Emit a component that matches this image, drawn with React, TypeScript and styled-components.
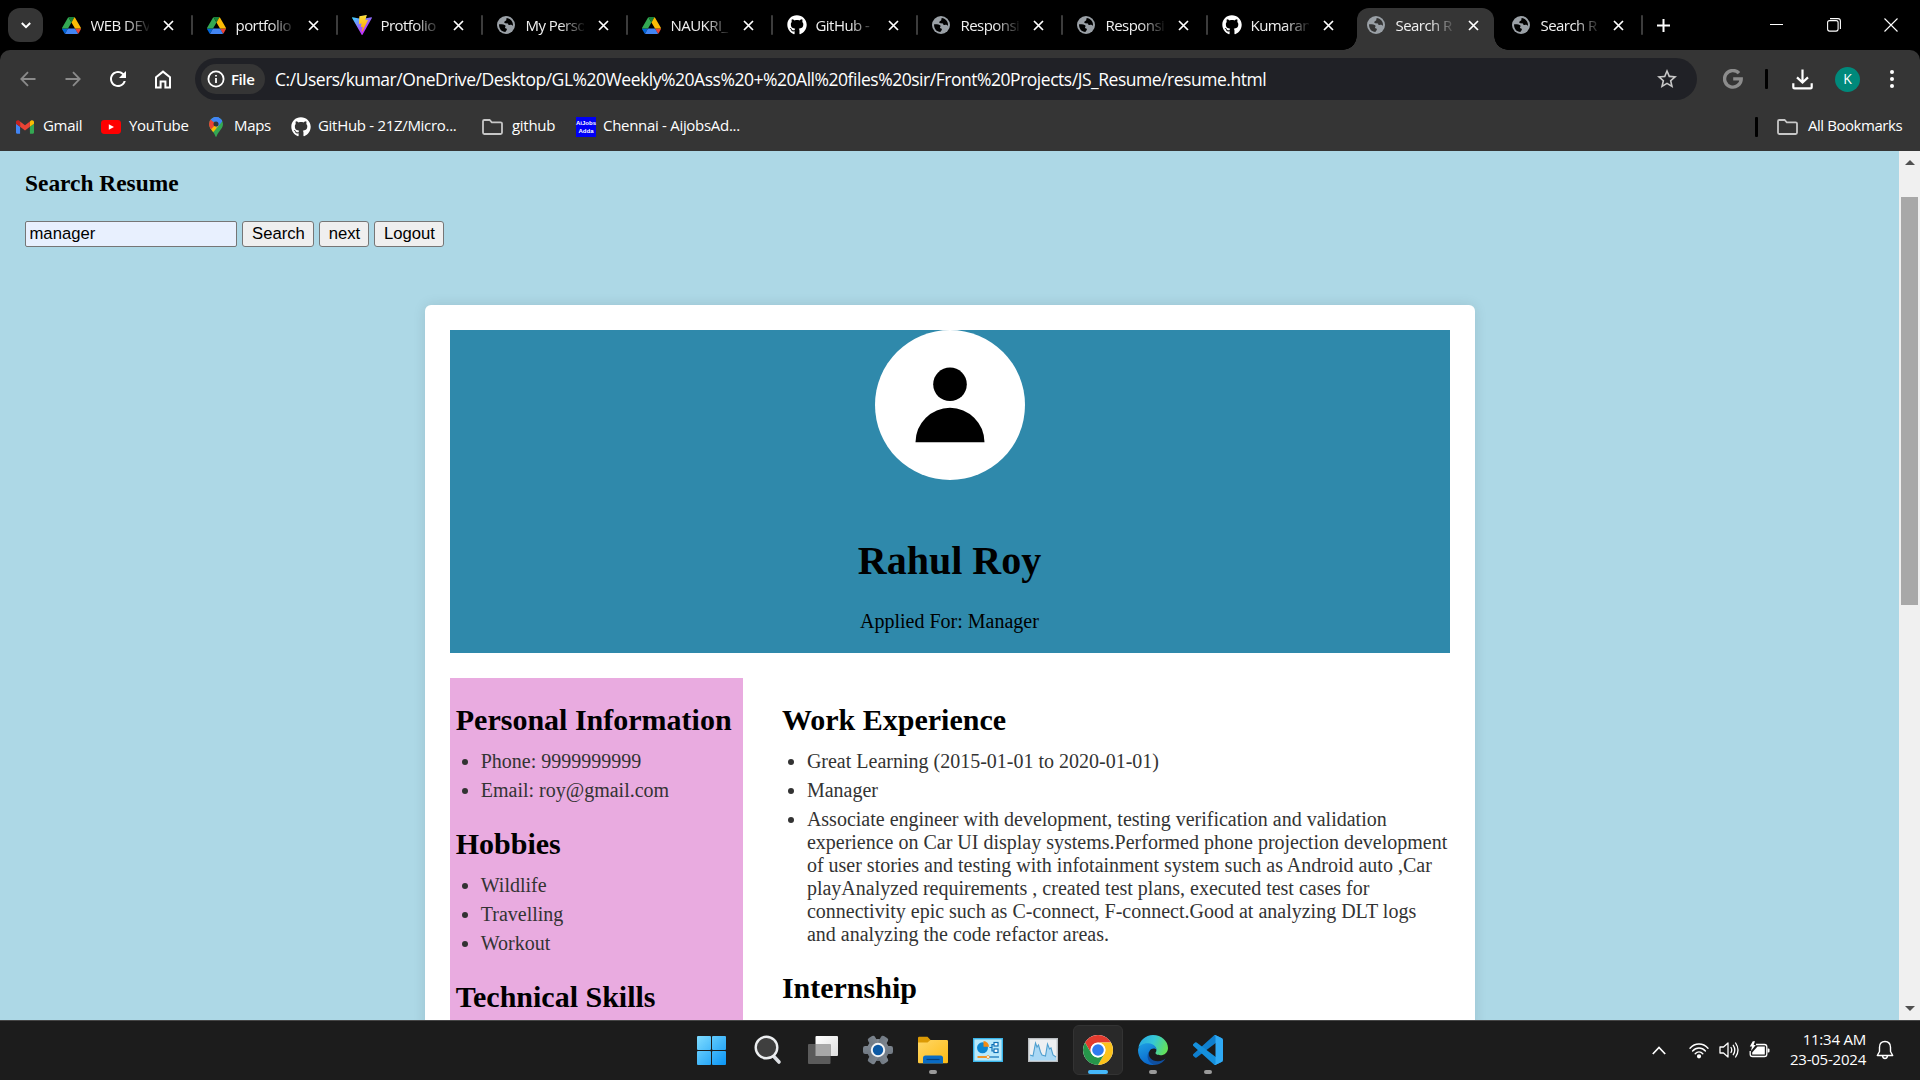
import React from "react";
import styled, { createGlobalStyle, css } from "styled-components";
import { FaGithub } from "react-icons/fa";
import { MdStarBorder, MdRefresh } from "react-icons/md";

const ui = `"Segoe UI", "Open Sans", "Noto Sans", sans-serif`;
const serif = `"Liberation Serif", "Times New Roman", serif`;
const sans = `"Liberation Sans", Arial, sans-serif`;

const GlobalStyle = createGlobalStyle`
  * { box-sizing: border-box; }
  body { margin: 0; background: #000; overflow: hidden; }
  svg { display: block; flex: none; }
`;

const Screen = styled.div`
  width: 1920px;
  height: 1080px;
  display: flex;
  flex-direction: column;
  overflow: hidden;
  background: #000;
`;

/* ---------- tab strip ---------- */

const TabStrip = styled.div`
  height: 50px;
  flex: none;
  display: flex;
  align-items: stretch;
  padding-left: 8px;
  background: #000;
  color: #f0f0f0;
  font: 15px ${ui};
`;

const TabSearch = styled.div`
  width: 35px;
  height: 34px;
  margin: 8px 8.5px 0 0;
  border-radius: 12px;
  background: #353535;
  display: grid;
  place-items: center;
`;

const TabBox = styled.div<{ $active?: boolean }>`
  position: relative;
  width: 137px;
  flex: none;
  margin: 8px 8px 0 0;
  padding: 0 0 8px 10px;
  display: flex;
  align-items: center;
  border-radius: 12px 12px 0 0;
  ${(p) =>
    p.$active &&
    css`
      background: #353535;
      &::before,
      &::after {
        content: "";
        position: absolute;
        bottom: 0;
        width: 14px;
        height: 14px;
      }
      &::before {
        left: -14px;
        background: radial-gradient(circle at 0 0, transparent 13.5px, #353535 14px);
      }
      &::after {
        right: -14px;
        background: radial-gradient(circle at 100% 0, transparent 13.5px, #353535 14px);
      }
    `}
`;

const TabIcon = styled.span`
  width: 20px;
  height: 20px;
  display: grid;
  place-items: center;
  justify-items: start;
`;

const TabTitle = styled.span`
  width: 58px;
  margin-left: 9px;
  overflow: hidden;
  white-space: nowrap;
  letter-spacing: -0.55px;
  line-height: 22px;
  mask-image: linear-gradient(90deg, #000 58%, transparent 104%);
`;

const TabClose = styled.span`
  margin-left: 14.5px;
`;

const TabDivider = styled.span`
  position: absolute;
  left: 139.5px;
  top: 7px;
  width: 2px;
  height: 20px;
  border-radius: 1px;
  background: #3c3c3c;
`;

const NewTab = styled.div`
  display: flex;
  align-items: center;
  margin-left: 10px;
`;

const WindowControls = styled.div`
  margin-left: auto;
  padding-right: 1px;
  display: flex;
`;

const WindowControl = styled.div`
  width: 57px;
  padding-bottom: 1px;
  display: grid;
  place-items: center;
`;

/* ---------- toolbar ---------- */

const Chrome = styled.div`
  height: 101px;
  flex: none;
  border-radius: 10px 10px 0 0;
  background: #353535;
  color: #fff;
  display: flex;
  flex-direction: column;
`;

const Toolbar = styled.div`
  height: 58px;
  display: flex;
  align-items: center;
`;

const NavButtons = styled.div`
  width: 195px;
  padding-left: 5px;
  display: grid;
  grid-template-columns: repeat(4, 45px);
  justify-items: center;
  align-items: center;
`;

const Omnibox = styled.div`
  width: 1502px;
  height: 42px;
  border-radius: 21px;
  background: #202126;
  display: flex;
  align-items: center;
  padding: 0 18px 0 6px;
`;

const FileChip = styled.div`
  width: 64px;
  height: 30px;
  border-radius: 15px;
  background: #353535;
  display: flex;
  align-items: center;
  gap: 6px;
  padding-left: 6px;
  font: 600 15px/20px ${ui};
  letter-spacing: -0.4px;
`;

const ChipText = styled.span`
  padding-bottom: 1px;
`;

const Url = styled.span`
  flex: 1;
  padding-left: 10px;
  font: 17.5px/24px ${ui};
  letter-spacing: -0.47px;
  white-space: nowrap;
`;

const ToolbarActions = styled.div`
  flex: 1;
  display: flex;
  align-items: center;
`;

const Divider = styled.span<{ $left: number }>`
  width: 3px;
  height: 20px;
  margin-left: ${(p) => p.$left}px;
  border-radius: 1px;
  background: #000;
`;

const Profile = styled.span`
  width: 25px;
  height: 25px;
  margin: 0 30px 0 22px;
  border-radius: 50%;
  background: #00897b;
  display: grid;
  place-items: center;
  font: 14px/24px ${ui};
`;

const GoogleG = styled.span`
  margin-left: 26px;
`;

const Download = styled.span`
  margin-left: 24px;
`;

const BookmarkBar = styled.div`
  height: 37px;
  display: flex;
  align-items: center;
  padding: 0 0 0 16px;
  font: 15px/22px ${ui};
  letter-spacing: -0.3px;
`;

const Bookmark = styled.div<{ $w: number; $icon: number }>`
  width: ${(p) => p.$w}px;
  display: grid;
  grid-template-columns: ${(p) => p.$icon}px auto;
  align-items: center;
  white-space: nowrap;
`;

const BookmarkLabel = styled.span`
  margin: -2px 0 2px;
  white-space: nowrap;
`;

const AllBookmarks = styled.div`
  margin-left: auto;
  width: 165px;
  display: flex;
  align-items: center;
  letter-spacing: -0.45px;
`;

const AllFolder = styled.span`
  margin: 0 10px 0 19px;
`;

const AiBadge = styled.span`
  width: 20px;
  height: 20px;
  background: #0000f5;
  color: #fff;
  display: grid;
  place-content: center;
  text-align: center;
  font: 700 6px/8px ${sans};
  letter-spacing: 0;
`;

/* ---------- page ---------- */

const Viewport = styled.div`
  flex: 1;
  min-height: 0;
  display: flex;
  background: #add8e6;
`;

const Page = styled.main`
  flex: 1;
  overflow: hidden;
  padding: 19px 25px 0;
  color: #000;
  font: 20px/23px ${serif};
`;

const PageTitle = styled.h3`
  margin: 0;
  font-size: 23.4px;
  line-height: 27px;
`;

const SearchRow = styled.div`
  display: flex;
  gap: 5px;
  margin-top: 24px;
  height: 26px;
`;

const SearchInput = styled.input`
  width: 212px;
  height: 26px;
  padding: 1px 3px 2px 3.5px;
  border: 1px solid #767676;
  border-radius: 2px;
  background: #e8f0fe;
  color: #000;
  font: 16.67px ${sans};
  outline: none;
`;

const PageButton = styled.button<{ $w: number }>`
  width: ${(p) => p.$w}px;
  height: 26px;
  padding: 0 0 1px 1px;
  border: 1px solid #767676;
  border-radius: 3px;
  background: #efefef;
  color: #000;
  font: 16.67px ${sans};
`;

const Card = styled.article`
  width: 1050px;
  height: 900px;
  margin: 58px auto 0;
  padding: 25px;
  border-radius: 6px;
  background: #fff;
  box-shadow: 0 0 12.5px rgba(0, 0, 0, 0.1);
`;

const CardHeader = styled.header`
  height: 323px;
  background: #2f89ab;
  display: flex;
  flex-direction: column;
  align-items: center;
`;

const Avatar = styled.div`
  width: 150px;
  height: 150px;
  border-radius: 50%;
  background: #fff;
`;

const Name = styled.h1`
  margin: 58px 0 0;
  font-size: 40px;
  line-height: 46px;
`;

const Role = styled.p`
  margin: 26px 0 0;
`;

const Columns = styled.div`
  display: grid;
  grid-template-columns: 293px 668px;
  column-gap: 39.4px;
  margin-top: 25px;
`;

const Column = styled.div<{ $side?: boolean }>`
  height: 600px;
  padding: 25px 0 0 ${(p) => (p.$side ? 6.25 : 0)}px;
  background: ${(p) => (p.$side ? "#e9abe0" : "#fff")};
`;

const Section = styled.section`
  margin-bottom: 25px;
`;

const Heading = styled.h2`
  margin: 0 0 12.5px;
  font-size: 30px;
  line-height: 34.5px;
  white-space: nowrap;
`;

const List = styled.ul`
  margin: 0;
  padding: 0 0 0 25px;
  color: #333;
`;

const Item = styled.li`
  margin-bottom: 6px;
`;

/* ---------- scrollbar ---------- */

const Scrollbar = styled.div`
  width: 21px;
  background: #f0f0f0;
  display: flex;
  flex-direction: column;
  align-items: center;
  justify-content: space-between;
  padding: 9px 0 9px;
`;

const Thumb = styled.div`
  width: 17px;
  height: 408px;
  margin: 32px 0 auto;
  background: #a8a8a8;
`;

/* ---------- taskbar ---------- */

const Taskbar = styled.footer`
  height: 60px;
  flex: none;
  display: flex;
  border-top: 1px solid #454545;
  background: #1c1c1c;
  padding-left: 683px;
`;

const Task = styled.div<{ $w?: number }>`
  position: relative;
  width: ${(p) => p.$w ?? 55}px;
  padding-bottom: 1px;
  display: flex;
  align-items: center;
  justify-content: center;
`;

const ActiveTile = styled.div`
  width: 50px;
  height: 50px;
  border: 1px solid #333;
  border-radius: 6px;
  background: #292929;
  display: grid;
  place-items: center;
`;

const Indicator = styled.span<{ $active?: boolean }>`
  position: absolute;
  bottom: 6px;
  left: 50%;
  width: ${(p) => (p.$active ? 20 : 8)}px;
  height: 4px;
  transform: translateX(-50%);
  border-radius: 2px;
  background: ${(p) => (p.$active ? "#45b8fa" : "#9a9a9a")};
`;

const Tray = styled.div`
  margin-left: auto;
  display: flex;
  align-items: center;
  padding: 0 26px 1px 0;
  color: #fff;
`;

const TrayIcons = styled.div`
  display: flex;
  align-items: center;
  gap: 10px;
  margin-left: 23px;
`;

const Clock = styled.div`
  width: 96px;
  margin: -2px 10px 0 0;
  text-align: right;
  font: 15px/20px ${ui};
  letter-spacing: -0.22px;
`;

/* ---------- icons ---------- */

const DriveIcon = () => (
  <svg width="19" height="17" viewBox="0 0 87.3 78">
    <path d="m6.6 66.85 3.85 6.65c.8 1.4 1.95 2.5 3.3 3.3l13.75-23.8h-27.5c0 1.55.4 3.1 1.2 4.5z" fill="#0066da" />
    <path d="m43.65 25-13.75-23.8c-1.35.8-2.5 1.9-3.3 3.3l-25.4 44a9.06 9.06 0 0 0 -1.2 4.5h27.5z" fill="#34a853" />
    <path d="m73.55 76.8c1.35-.8 2.5-1.9 3.3-3.3l1.6-2.75 7.65-13.25c.8-1.4 1.2-2.95 1.2-4.5h-27.502l5.852 11.5z" fill="#ea4335" />
    <path d="m43.65 25 13.75-23.8c-1.35-.8-2.9-1.2-4.5-1.2h-18.5c-1.6 0-3.15.45-4.5 1.2z" fill="#188038" />
    <path d="m59.8 53h-32.3l-13.75 23.8c1.35.8 2.9 1.2 4.5 1.2h50.8c1.6 0 3.15-.45 4.5-1.2z" fill="#4285f4" />
    <path d="m73.4 26.5-12.7-22c-.8-1.4-1.95-2.5-3.3-3.3l-13.75 23.8 16.15 28h27.45c0-1.55-.4-3.1-1.2-4.5z" fill="#fbbc04" />
  </svg>
);

const ViteIcon = () => (
  <svg width="20" height="20" viewBox="0 0 256 257">
    <defs>
      <linearGradient id="viteA" x1="-.8%" x2="57.6%" y1="7.6%" y2="78.4%">
        <stop offset="0%" stopColor="#41D1FF" />
        <stop offset="100%" stopColor="#BD34FE" />
      </linearGradient>
      <linearGradient id="viteB" x1="43.4%" x2="50.3%" y1="2.2%" y2="89%">
        <stop offset="0%" stopColor="#FFEA83" />
        <stop offset="8%" stopColor="#FFDD35" />
        <stop offset="100%" stopColor="#FFA800" />
      </linearGradient>
    </defs>
    <path fill="url(#viteA)" d="m255.153 37.938-120.3 215.114c-2.483 4.44-8.862 4.466-11.382.048L.875 37.958c-2.746-4.814 1.371-10.646 6.827-9.67l120.385 21.517a6.537 6.537 0 0 0 2.322-.004l117.867-21.483c5.438-.991 9.574 4.796 6.877 9.62Z" />
    <path fill="url(#viteB)" d="M185.432.063 96.44 17.501a3.268 3.268 0 0 0-2.634 3.014l-5.474 92.456a3.268 3.268 0 0 0 3.997 3.378l24.777-5.718c2.318-.535 4.413 1.507 3.936 3.838l-7.361 36.047c-.495 2.426 1.782 4.5 4.151 3.78l15.304-4.649c2.372-.72 4.652 1.36 4.15 3.788l-11.698 56.621c-.732 3.542 3.979 5.473 5.943 2.437l1.313-2.028 72.516-144.72c1.215-2.423-.88-5.186-3.54-4.672l-25.505 4.922c-2.396.462-4.435-1.77-3.759-4.114l16.646-57.705c.677-2.35-1.37-4.583-3.769-4.113Z" />
  </svg>
);

const GlobeIcon = ({ hole }: { hole: string }) => (
  <svg width="18" height="18" viewBox="0 0 18 18">
    <circle cx="9" cy="9" r="9" fill="#9aa0a6" />
    <path fill={hole} d="M9.8 2.1 C13.4 2.5 16 5.4 16 9 C16 9.3 15.9 9.6 15.8 9.9 C14.9 8.6 13.6 8.8 12.7 9 C11.5 9.2 11 8.3 11 7.4 L8.3 7.2 C7.2 7.1 7 6 7.6 5.4 L9 4.6 C9.8 4 8.9 3 9.8 2.1 Z" />
    <path fill={hole} d="M2.1 8.2 C4.6 8.1 7.6 8.3 8.4 9.5 C9 10.5 7.8 11 8 11.8 C8.4 12.8 10 12.3 9.9 13.6 C9.8 14.5 8.9 15 8.4 16 C4.6 15.8 1.7 12.6 2.1 8.2 Z" />
  </svg>
);

const CloseIcon = () => (
  <svg width="11" height="11" viewBox="0 0 11 11" stroke="#fff" strokeWidth="1.7">
    <path d="M1 1 10 10 M10 1 1 10" />
  </svg>
);

const ArrowIcon = ({ flip }: { flip?: boolean }) => (
  <svg width="16" height="16" viewBox="0 0 16 16" fill="none" stroke="#8a8a8a" strokeWidth="1.8" transform={flip ? "scale(-1,1)" : undefined}>
    <path d="M15.5 8H1.5 M8 1.2 1.3 8 8 14.8" />
  </svg>
);

const HomeIcon = () => (
  <svg width="18" height="19" viewBox="0 0 18 19" fill="none" stroke="#fff" strokeWidth="2">
    <path d="M2 7.2 9 1.6 16 7.2 V17.5 H11.4 V11.5 H6.6 V17.5 H2 Z" />
  </svg>
);

const InfoIcon = () => (
  <svg width="18" height="18" viewBox="0 0 18 18" fill="none" stroke="#fff" strokeWidth="1.8">
    <circle cx="9" cy="9" r="7.6" />
    <path d="M9 8V13 M9 5V6.6" />
  </svg>
);

const GIcon = () => (
  <svg width="20" height="20" viewBox="0 0 20 20" fill="none" stroke="#8c8c8c" strokeWidth="3.4">
    <path d="M16 4.2 A8.3 8.3 0 1 0 18.2 9.9 H10.2" />
  </svg>
);

const DownloadIcon = () => (
  <svg width="21" height="21" viewBox="0 0 21 21" fill="none" stroke="#fff" strokeWidth="2.2">
    <path d="M10.5 0.5V13 M5 8.4 10.5 13.6 16 8.4" />
    <path d="M1.3 14.2V18 Q1.3 19.4 2.7 19.4 H18.3 Q19.7 19.4 19.7 18 V14.2" />
  </svg>
);

const FolderOutline = () => (
  <svg width="21" height="16" viewBox="0 0 21 16" fill="none" stroke="#c7c7c7" strokeWidth="1.8">
    <path d="M1 2.3 Q1 1 2.3 1 H7.6 L9.8 3.3 H18.6 Q20 3.3 20 4.6 V13.6 Q20 15 18.6 15 H2.3 Q1 15 1 13.6 Z" />
  </svg>
);

const GmailIcon = () => (
  <svg width="18" height="14" viewBox="52 42 88 66">
    <path fill="#4285f4" d="M58 108h14V74L52 59v43c0 3.32 2.69 6 6 6" />
    <path fill="#34a853" d="M120 108h14c3.32 0 6-2.69 6-6V59l-20 15" />
    <path fill="#fbbc04" d="M120 48v26l20-15v-8c0-7.42-8.47-11.65-14.4-7.2" />
    <path fill="#ea4335" d="M72 74V48l24 18 24-18v26L96 92" />
    <path fill="#c5221f" d="M52 51v8l20 15V48l-5.6-4.2c-5.94-4.45-14.4-.22-14.4 7.2" />
  </svg>
);

const YouTubeIcon = () => (
  <svg width="20" height="14" viewBox="0 0 20 14">
    <rect width="20" height="14" rx="3.4" fill="#f00" />
    <path d="M7.8 4.2 13 7 7.8 9.8Z" fill="#fff" />
  </svg>
);

const MapsIcon = () => (
  <svg width="14" height="20" viewBox="0 0 14 20">
    <defs>
      <clipPath id="pin">
        <path d="M7 0a7 7 0 0 1 7 7c0 3-1.6 4.6-3.3 6.9C9 16 8.2 17 7.6 19.3c-.2.7-1 .7-1.2 0C5.8 17 5 16 3.3 13.9 1.6 11.6 0 10 0 7a7 7 0 0 1 7-7Z" />
      </clipPath>
    </defs>
    <g clipPath="url(#pin)">
      <rect width="14" height="20" fill="#34a853" />
      <path d="M-1 14 7 4 9.5 9 3 16.5Z" fill="#fbbc04" />
      <path d="M-1 10V1L2 2.4 7 7 1.5 13Z" fill="#ea4335" />
      <path d="M1.5 2.5 5 -1H8L14 3 7 11 8 4 4.5 5Z" fill="#4285f4" />
      <path d="M4.8 0H10L13.5 4 9.5 9 6 5Z" fill="#4285f4" />
    </g>
    <circle cx="7" cy="7" r="2.5" fill="#353535" />
  </svg>
);

const StartIcon = () => (
  <svg width="29" height="29" viewBox="0 0 29 29">
    <defs>
      <linearGradient id="win" x1="0" y1="0" x2="1" y2="1">
        <stop offset="0" stopColor="#7fdcff" />
        <stop offset="1" stopColor="#0a95f5" />
      </linearGradient>
      <mask id="panes">
        <rect width="14" height="14" rx="1" fill="#fff" />
        <rect x="15" width="14" height="14" rx="1" fill="#fff" />
        <rect y="15" width="14" height="14" rx="1" fill="#fff" />
        <rect x="15" y="15" width="14" height="14" rx="1" fill="#fff" />
      </mask>
    </defs>
    <rect width="29" height="29" fill="url(#win)" mask="url(#panes)" />
  </svg>
);

const SearchIcon = () => (
  <svg width="28" height="30" viewBox="0 0 28 30" fill="none">
    <path d="M18.5 20 25 27" stroke="#dcdfe3" strokeWidth="3.6" strokeLinecap="round" />
    <circle cx="12.5" cy="12.5" r="10.8" fill="#3f3f3f" stroke="#eceef0" strokeWidth="2.4" />
  </svg>
);

const TaskViewIcon = () => (
  <svg width="30" height="28" viewBox="0 0 30 28">
    <defs>
      <linearGradient id="tv" x1="0" y1="0" x2="1" y2="1">
        <stop offset="0" stopColor="#fff" />
        <stop offset="1" stopColor="#dedede" />
      </linearGradient>
    </defs>
    <rect x="7.5" y="0" width="22.5" height="20" rx="1" fill="url(#tv)" />
    <rect x="0" y="8" width="22.5" height="20" rx="1" fill="#5b5b5b" />
    <path d="M7.5 8H22.5V20H7.5Z" fill="#a8a8a8" />
  </svg>
);

const GearIcon = () => (
  <svg width="30" height="30" viewBox="-15 -15 30 30">
    <defs>
      <linearGradient id="gear" x1="0" y1="-15" x2="0" y2="15" gradientUnits="userSpaceOnUse">
        <stop offset="0" stopColor="#8b939c" />
        <stop offset="1" stopColor="#626b75" />
      </linearGradient>
    </defs>
    <g fill="url(#gear)">
      <circle r="11" />
      {[0, 60, 120].map((a) => (
        <rect key={a} x="-15" y="-4" width="30" height="8" rx="2.2" transform={`rotate(${a})`} />
      ))}
    </g>
    <circle r="6.2" fill="#0c59a4" stroke="#f2f4f6" strokeWidth="2" />
  </svg>
);

const ExplorerIcon = () => (
  <svg width="30" height="28" viewBox="0 0 30 28">
    <defs>
      <linearGradient id="fold" x1="0" y1="0" x2="1" y2="1">
        <stop offset="0" stopColor="#ffd766" />
        <stop offset="1" stopColor="#fdbb15" />
      </linearGradient>
    </defs>
    <path d="M0 2Q0 .8 1.2 .8H9.5L13 4.500H28V8H0Z" fill="#dc9a05" />
    <path d="M0 6.5H9.5L12.5 4H28.8Q30 4 30 5.2V26Q30 27.2 28.8 27.2H1.2Q0 27.2 0 26Z" fill="url(#fold)" />
    <path d="M5 27.5V22Q5 19.5 7.5 19.5H22.5Q25 19.5 25 22V27.5Z" fill="#0a6cc4" />
    <path d="M8.5 23.5H21.5" stroke="#053f7a" strokeWidth="1.2" />
  </svg>
);

const ControlPanelIcon = () => (
  <svg width="30" height="24" viewBox="0 0 30 24">
    <rect x=".7" y=".7" width="28.6" height="22.6" fill="#b9e9fb" stroke="#39b5ea" strokeWidth="1.4" />
    <circle cx="9.5" cy="9.8" r="5.5" fill="#0c86d2" />
    <path d="M10.5 8.8V3A5.8 5.8 0 0 1 16 8.8Z" fill="#f58b12" />
    <g fill="none" stroke="#0c6fb5" strokeWidth="1.2">
      <path d="M16.5 9.5H19V6.5H21 M19 9.5V13H21" />
      <rect x="21" y="4.5" width="4" height="3.5" fill="#fff" />
      <rect x="21" y="11" width="4" height="3.5" fill="#fff" />
    </g>
    <path d="M4.5 19H14" stroke="#f58b12" strokeWidth="1.8" />
    <path d="M16 19H26" stroke="#0c6fb5" strokeWidth="1.2" />
    <circle cx="15" cy="19" r="1.5" fill="#fff" stroke="#f58b12" strokeWidth=".7" />
  </svg>
);

const MonitorIcon = () => (
  <svg width="30" height="24" viewBox="0 0 30 24">
    <rect x=".7" y=".7" width="28.6" height="22.6" fill="#eef0f2" stroke="#b9bdc1" strokeWidth="1.4" />
    <path d="M2 17 5 18 7.5 5 9 9 10.5 7 12.5 14 14 17 17.5 18 19.5 6 21.5 11 23 10 25 17 28 19V22.5H2Z" fill="#a9d8f5" />
    <path d="M2 17 5 18 7.5 5 9 9 10.5 7 12.5 14 14 17 17.5 18 19.5 6 21.5 11 23 10 25 17 28 19" fill="none" stroke="#4f9fcf" strokeWidth="1.1" />
  </svg>
);

const ChromeIcon = () => (
  <svg width="30" height="30" viewBox="0 0 48 48">
    <circle cx="24" cy="24" r="24" fill="#fff" />
    <path fill="#e33b2e" d="M3.22 12A24 24 0 0 1 44.78 12H24A12 12 0 0 0 13.61 30Z" />
    <path fill="#fcc21b" d="M44.78 12A24 24 0 0 1 24 48L34.39 30A12 12 0 0 0 24 12Z" />
    <path fill="#26964a" d="M24 48A24 24 0 0 1 3.22 12L13.61 30A12 12 0 0 0 34.39 30Z" />
    <circle cx="24" cy="24" r="11.8" fill="#fff" />
    <circle cx="24" cy="24" r="9.3" fill="#2f7bf0" />
  </svg>
);

const EdgeIcon = () => (
  <svg width="30" height="30" viewBox="0 0 30 30">
    <defs>
      <linearGradient id="e1" x1="0" y1=".2" x2="1" y2=".5">
        <stop offset="0" stopColor="#27a8e6" />
        <stop offset=".5" stopColor="#36c8d5" />
        <stop offset="1" stopColor="#63e05a" />
      </linearGradient>
      <linearGradient id="e2" x1="0" y1="0" x2=".4" y2="1">
        <stop offset="0" stopColor="#1ea0e4" />
        <stop offset="1" stopColor="#0a68cc" />
      </linearGradient>
    </defs>
    <path fill="url(#e1)" d="M.4 12.8C1.5 5.5 7.5 0 15 0C23.5 0 30 6.2 30 13C30 17.5 26.5 20.3 22.5 20.3C18.5 20.3 17 18.5 17.6 17.6C19.5 15.5 18.5 10.5 12 9.5C7 8.8 2.5 10 .4 12.8Z" />
    <path fill="url(#e2)" d="M0 15C.5 10.5 5.5 7.8 10.5 8.2C15.5 8.6 19 12 18.6 15C17 13 13.5 13 11.5 16C8.5 21 12 28 17 29.8C7 31 0 24 0 15Z" />
    <path fill="#0f4fa0" d="M11.5 16C9 21.5 14 26.5 20 26.3C23.5 26.2 26 25 27.6 23.3C25 28 20.5 30 16.5 30C10 28 7.5 21 11.5 16Z" />
  </svg>
);

const CodeIcon = () => (
  <svg width="30" height="30" viewBox="0 0 100 100">
    <path fill="#0f7fce" d="M96.5 10.7 75.9.9a6.2 6.2 0 0 0-7.1 1.2L1.3 63.6a4.2 4.2 0 0 0 0 6.2l5.5 5a4.2 4.2 0 0 0 5.3.2L93.4 13.4a4.1 4.1 0 0 1 6.6 3.3v-.2a6.3 6.3 0 0 0-3.5-5.8Z" />
    <path fill="#1590dd" d="m96.5 89.3-20.6 9.8a6.2 6.2 0 0 1-7.1-1.2L1.3 36.4a4.2 4.2 0 0 1 0-6.2l5.5-5a4.2 4.2 0 0 1 5.3-.2l81.3 61.6a4.1 4.1 0 0 0 6.6-3.3v.2a6.3 6.3 0 0 1-3.5 5.8Z" />
    <path fill="#2faaf5" d="M75.9 99.1a6.2 6.2 0 0 1-7.1-1.2 3.7 3.7 0 0 0 6.2-2.6V4.7a3.7 3.7 0 0 0-6.2-2.6 6.2 6.2 0 0 1 7.1-1.2l20.6 9.9a6.3 6.3 0 0 1 3.5 5.6v67.2a6.3 6.3 0 0 1-3.5 5.6Z" />
  </svg>
);

const WifiIcon = () => (
  <svg width="20" height="17" viewBox="0 0 20 17" fill="none" stroke="#fff" strokeWidth="1.4" strokeLinecap="round">
    <path d="M1 6.2C6 .6 14 .6 19 6.2 M3.6 9C7.2 4.9 12.8 4.9 16.4 9 M6.2 11.7C8.3 9.3 11.7 9.3 13.8 11.7" />
    <circle cx="10" cy="14.3" r="1.4" fill="#fff" />
  </svg>
);

const VolumeIcon = () => (
  <svg width="20" height="18" viewBox="0 0 20 18" fill="none" stroke="#fff" strokeWidth="1.3" strokeLinejoin="round" strokeLinecap="round">
    <path d="M1 6H4.5L9 2V16L4.5 12H1Z M12 6.5Q13.5 9 12 11.5 M14.3 4.3Q17.3 9 14.3 13.7 M16.6 2Q21.4 9 16.6 16" />
  </svg>
);

const BatteryIcon = () => (
  <svg width="21" height="18" viewBox="0 0 21 18">
    <path d="M7 3.5H15.5Q17.8 3.5 17.8 5.8V13.2Q17.8 15.5 15.5 15.5H3.5Q1.2 15.5 1.2 13.2V10" fill="none" stroke="#fff" strokeWidth="1.3" />
    <path d="M8.5 5.5H15.8V13.5H3.2V11.5Z" fill="#fff" />
    <path d="M18.6 7.5H19.5Q20.5 7.5 20.5 8.5V10.5Q20.5 11.5 19.5 11.5H18.6Z" fill="#fff" />
    <path d="M3.8 .2 .8 5.5H3L2 10 6.8 4H4.6L6 .2Z" fill="#fff" />
  </svg>
);

const BellIcon = () => (
  <svg width="18" height="20" viewBox="0 0 18 20" fill="none" stroke="#fff" strokeWidth="1.4" strokeLinejoin="round">
    <path d="M9 1.5C5.5 1.5 3.5 4 3.5 7.3V11.5L1.3 15.5H16.7L14.5 11.5V7.3C14.5 4 12.5 1.5 9 1.5Z M6.5 16Q7 18.5 9 18.5T11.5 16" />
  </svg>
);

/* ---------- data ---------- */

type Fav = "drive" | "vite" | "globe" | "github";
const tabs: { icon: Fav; title: string; active?: boolean }[] = [
  { icon: "drive", title: "WEB DEV" },
  { icon: "drive", title: "portfolio" },
  { icon: "vite", title: "Protfolio" },
  { icon: "globe", title: "My Perso" },
  { icon: "drive", title: "NAUKRI_" },
  { icon: "github", title: "GitHub -" },
  { icon: "globe", title: "Responsi" },
  { icon: "globe", title: "Responsi" },
  { icon: "github", title: "Kumaran" },
  { icon: "globe", title: "Search R", active: true },
  { icon: "globe", title: "Search R" },
];

const side = [
  { title: "Personal Information", items: ["Phone: 9999999999", "Email: roy@gmail.com"] },
  { title: "Hobbies", items: ["Wildlife", "Travelling", "Workout"] },
  { title: "Technical Skills", items: [] },
];

const main = [
  {
    title: "Work Experience",
    items: [
      "Great Learning (2015-01-01 to 2020-01-01)",
      "Manager",
      "Associate engineer with development, testing verification and validation experience on Car UI display systems.Performed phone projection development of user stories and testing with infotainment system such as Android auto ,Car playAnalyzed requirements , created test plans, executed test cases for connectivity epic such as C-connect, F-connect.Good at analyzing DLT logs and analyzing the code refactor areas.",
    ],
  },
  { title: "Internship", items: [] },
];

const bookmarks: { label: string; width: number; iconWidth: number; icon: React.ReactNode }[] = [
  { label: "Gmail", width: 85, iconWidth: 27, icon: <GmailIcon /> },
  { label: "YouTube", width: 108, iconWidth: 28, icon: <YouTubeIcon /> },
  { label: "Maps", width: 82, iconWidth: 25, icon: <MapsIcon /> },
  { label: "GitHub - 21Z/Micro...", width: 191, iconWidth: 27, icon: <FaGithub size={20} color="#fff" /> },
  { label: "github", width: 94, iconWidth: 30, icon: <FolderOutline /> },
  {
    label: "Chennai - AijobsAd...",
    width: 180,
    iconWidth: 27,
    icon: (
      <AiBadge>
        AiJobs
        <br />
        Adda
      </AiBadge>
    ),
  },
];

const Favicon = ({ kind, active }: { kind: Fav; active?: boolean }) => {
  if (kind === "drive") return <DriveIcon />;
  if (kind === "vite") return <ViteIcon />;
  if (kind === "github") return <FaGithub size={20} color="#fff" />;
  return <GlobeIcon hole={active ? "#353535" : "#000"} />;
};

const Sections = ({ data }: { data: { title: string; items: string[] }[] }) => (
  <>
    {data.map((s) => (
      <Section key={s.title}>
        <Heading>{s.title}</Heading>
        <List>
          {s.items.map((t) => (
            <Item key={t}>{t}</Item>
          ))}
        </List>
      </Section>
    ))}
  </>
);

export default function App() {
  return (
    <Screen>
      <GlobalStyle />
      <TabStrip>
        <TabSearch>
          <svg width="10" height="7" viewBox="0 0 10 7" fill="none" stroke="#fff" strokeWidth="2">
            <path d="M.8 1 5 5.2 9.2 1" />
          </svg>
        </TabSearch>
        {tabs.map((t, i) => (
          <TabBox key={i} $active={t.active}>
            <TabIcon>
              <Favicon kind={t.icon} active={t.active} />
            </TabIcon>
            <TabTitle>{t.title}</TabTitle>
            <TabClose>
              <CloseIcon />
            </TabClose>
            {!t.active && i !== 8 && <TabDivider />}
          </TabBox>
        ))}
        <NewTab>
          <svg width="13" height="13" viewBox="0 0 13 13" stroke="#fff" strokeWidth="2">
            <path d="M6.5 0V13 M0 6.5H13" />
          </svg>
        </NewTab>
        <WindowControls>
          <WindowControl>
            <svg width="13" height="13" viewBox="0 0 13 13" stroke="#fff">
              <path d="M0 6.5H13" />
            </svg>
          </WindowControl>
          <WindowControl>
            <svg width="14" height="14" viewBox="0 0 14 14" fill="none" stroke="#fff" strokeWidth="1.1">
              <rect x=".6" y="2.6" width="10.5" height="10.5" rx="2" />
              <path d="M3 .6H11Q13.4 .6 13.4 3V11" />
            </svg>
          </WindowControl>
          <WindowControl>
            <svg width="14" height="14" viewBox="0 0 14 14" stroke="#fff" strokeWidth="1.1">
              <path d="M.5 .5 13.5 13.5 M13.5 .5 .5 13.5" />
            </svg>
          </WindowControl>
        </WindowControls>
      </TabStrip>

      <Chrome>
        <Toolbar>
          <NavButtons>
            <ArrowIcon />
            <ArrowIcon flip />
            <MdRefresh size={24} color="#fff" />
            <HomeIcon />
          </NavButtons>
          <Omnibox>
            <FileChip>
              <InfoIcon />
              <ChipText>File</ChipText>
            </FileChip>
            <Url>C:/Users/kumar/OneDrive/Desktop/GL%20Weekly%20Ass%20+%20All%20files%20sir/Front%20Projects/JS_Resume/resume.html</Url>
            <MdStarBorder size={24} color="#c7c7c7" />
          </Omnibox>
          <ToolbarActions>
            <GoogleG>
              <GIcon />
            </GoogleG>
            <Divider $left={22} />
            <Download>
              <DownloadIcon />
            </Download>
            <Profile>K</Profile>
            <svg width="4" height="18" viewBox="0 0 4 18" fill="#fff">
              <circle cx="2" cy="2" r="2" />
              <circle cx="2" cy="9" r="2" />
              <circle cx="2" cy="16" r="2" />
            </svg>
          </ToolbarActions>
        </Toolbar>
        <BookmarkBar>
          {bookmarks.map((b) => (
            <Bookmark key={b.label} $w={b.width} $icon={b.iconWidth}>
              {b.icon}
              <BookmarkLabel>{b.label}</BookmarkLabel>
            </Bookmark>
          ))}
          <AllBookmarks>
            <Divider $left={0} />
            <AllFolder>
              <FolderOutline />
            </AllFolder>
            <BookmarkLabel>All Bookmarks</BookmarkLabel>
          </AllBookmarks>
        </BookmarkBar>
      </Chrome>

      <Viewport>
        <Page>
          <PageTitle>Search Resume</PageTitle>
          <SearchRow>
            <SearchInput defaultValue="manager" />
            <PageButton $w={72}>Search</PageButton>
            <PageButton $w={50}>next</PageButton>
            <PageButton $w={70}>Logout</PageButton>
          </SearchRow>
          <Card>
            <CardHeader>
              <Avatar>
                <svg width="150" height="150" viewBox="0 0 150 150">
                  <circle cx="75" cy="54.3" r="16.8" />
                  <path d="M40.5 112.3A34.5 34.5 0 0 1 109.5 112.3Z" />
                </svg>
              </Avatar>
              <Name>Rahul Roy</Name>
              <Role>Applied For: Manager</Role>
            </CardHeader>
            <Columns>
              <Column $side>
                <Sections data={side} />
              </Column>
              <Column>
                <Sections data={main} />
              </Column>
            </Columns>
          </Card>
        </Page>
        <Scrollbar>
          <svg width="10" height="5" viewBox="0 0 10 5" fill="#505050">
            <path d="M0 5 5 0 10 5Z" />
          </svg>
          <Thumb />
          <svg width="10" height="5" viewBox="0 0 10 5" fill="#505050">
            <path d="M0 0 5 5 10 0Z" />
          </svg>
        </Scrollbar>
      </Viewport>

      <Taskbar>
        <Task $w={57}>
          <StartIcon />
        </Task>
        <Task>
          <SearchIcon />
        </Task>
        <Task>
          <TaskViewIcon />
        </Task>
        <Task>
          <GearIcon />
        </Task>
        <Task>
          <ExplorerIcon />
          <Indicator />
        </Task>
        <Task>
          <ControlPanelIcon />
        </Task>
        <Task>
          <MonitorIcon />
        </Task>
        <Task>
          <ActiveTile>
            <ChromeIcon />
          </ActiveTile>
          <Indicator $active />
        </Task>
        <Task>
          <EdgeIcon />
          <Indicator />
        </Task>
        <Task>
          <CodeIcon />
          <Indicator />
        </Task>
        <Tray>
          <svg width="14" height="9" viewBox="0 0 14 9" fill="none" stroke="#fff" strokeWidth="1.7">
            <path d="M.8 8 7 1.5 13.2 8" />
          </svg>
          <TrayIcons>
            <WifiIcon />
            <VolumeIcon />
            <BatteryIcon />
          </TrayIcons>
          <Clock>
            11:34 AM
            <br />
            23-05-2024
          </Clock>
          <BellIcon />
        </Tray>
      </Taskbar>
    </Screen>
  );
}
